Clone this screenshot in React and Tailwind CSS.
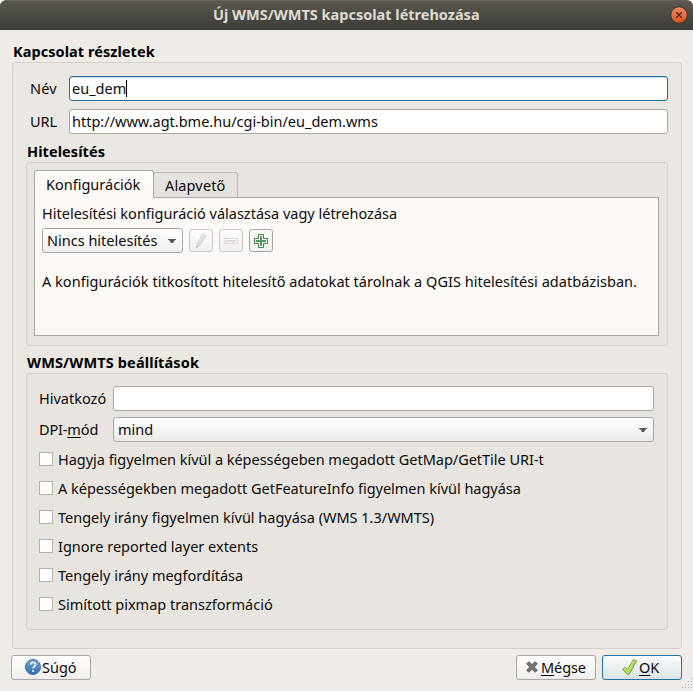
function GroupTitle({ className, children }) {
  return <h2 className={"flex items-end font-bold leading-[21px] text-black " + className}>{children}</h2>;
}

function Frame({ className, children }) {
  return <section className={"rounded-[3px] border border-[#d4d0cb] " + className}>{children}</section>;
}

function Field({ className, children }) {
  return (
    <div className={"flex h-[25px] flex-1 items-center rounded-[3px] border bg-white px-[2px] leading-[21px] " + className}>
      {children}
    </div>
  );
}

function Mnemonic({ children }) {
  return <u className="decoration-1 underline-offset-[2px]">{children}</u>;
}

function Arrow() {
  return (
    <svg width="8" height="4" viewBox="0 0 8 4" className="mt-px shrink-0">
      <path d="M0 0H8V1H7L5 4H3L1 1H0Z" fill="#5b5a57" />
    </svg>
  );
}

function ToolButton({ disabled, children }) {
  return (
    <button
      className={
        "flex h-[23px] w-6 items-center justify-center rounded-[3px] border bg-linear-to-b from-[#fcfcfb] to-[#f1f0ee] " +
        (disabled ? "border-[#c9c5c2]" : "border-[#aaa6a3]")
      }
    >
      {children}
    </button>
  );
}

function Grip() {
  const dots = [[9, 0], [6, 3], [9, 3], [3, 6], [6, 6], [9, 6], [0, 9], [3, 9], [6, 9], [9, 9]];
  return (
    <svg width="11" height="11" viewBox="0 0 11 11" className="absolute right-0 bottom-[2px]">
      {dots.map(([x, y]) => (
        <rect key={x + "-" + y} x={x} y={y} width="1" height="1" fill="#b3afab" />
      ))}
    </svg>
  );
}

const options = [
  ["Hagyja figyelmen kívül a képességeben megadott GetMap/GetTile URI-t", "tracking-[-0.03px]"],
  ["A képességekben megadott GetFeatureInfo figyelmen kívül hagyása", "tracking-[-0.02px]"],
  ["Tengely irány figyelmen kívül hagyása (WMS 1.3/WMTS)", "tracking-[-0.01px]"],
  ["Ignore reported layer extents", "tracking-normal"],
  ["Tengely irány megfordítása", "tracking-normal"],
  ["Simított pixmap transzformáció", "tracking-normal"],
];

export default function App() {
  return (
    <main className="relative flex h-[691px] w-[693px] flex-col overflow-hidden bg-white font-['Noto_Sans',sans-serif] text-[14.5px] whitespace-nowrap text-[#0b0b0b]">
      <header className="flex h-[30px] shrink-0 items-center justify-between rounded-t-[6px] border-t border-[#66635b] bg-linear-to-b from-[#5a574f] to-[#3d3c38] pr-[5px] pl-[213px]">
        <h1 className="-mt-[2px] font-bold text-[#dfdbd2]">Új WMS/WMTS kapcsolat létrehozása</h1>
        <svg width="18" height="18" viewBox="0 0 18 18" className="-mt-px">
          <defs>
            <linearGradient id="close" x1="0" y1="0" x2="0" y2="1">
              <stop offset="0" stopColor="#f68a61" />
              <stop offset="1" stopColor="#e0501d" />
            </linearGradient>
          </defs>
          <circle cx="9" cy="9" r="8.3" fill="url(#close)" stroke="#37322c" />
          <path d="M6.300 6.300l5.400 5.400M11.700 6.300l-5.400 5.400" stroke="#45291b" strokeWidth="1.3" />
        </svg>
      </header>

      <div className="flex flex-1 flex-col bg-[#efebe7] px-[11px]">
        <GroupTitle className="h-[32px] pl-[2px] tracking-[0.06px]">Kapcsolat részletek</GroupTitle>
        <Frame className="ml-px h-[587px] bg-[#ebe8e3] px-[13px] pt-[13px]">
          <div className="flex flex-col gap-2">
            <label className="flex items-center">
              <b className="w-[43px] pl-1 font-normal tracking-[0.2px]">Név</b>
              <Field className="border-[#25709c] shadow-[inset_0_1px_0_#c5dae6]">
                <span>eu_dem</span>
                <i className="h-[17px] w-px bg-black" />
              </Field>
            </label>
            <label className="flex items-center">
              <b className="w-[43px] pl-1 font-normal">URL</b>
              <Field className="border-[#aaa6a2]">http://www.agt.bme.hu/cgi-bin/eu_dem.wms</Field>
            </label>
          </div>

          <GroupTitle className="h-[28px] pl-px tracking-[0.08px]">Hitelesítés</GroupTitle>
          <Frame className="h-[184px] bg-[#e8e5e0] pt-[7px] pr-[8px] pl-[7px]">
            <nav className="flex h-[27px] items-end">
              <div className="relative -mb-px h-[28px] w-[120px] rounded-t-[3px] border border-b-0 border-[#aaa6a3] bg-linear-to-b from-white to-[#fdf9f6] to-50% pl-[11px] leading-[27px]">
                Konfigurációk
              </div>
              <div className="-ml-px h-[25px] w-[85px] rounded-t-[3px] border border-b-0 border-[#bbb7b3] bg-[#e6e3df] pl-[11px] leading-[25px] tracking-[0.15px]">
                Alapvető
              </div>
            </nav>
            <div className="h-[139px] border border-[#aaa6a3] bg-[#fdf9f6] px-[7px] pt-[5px]">
              <p className="leading-[21px]">Hitelesítési konfiguráció választása vagy létrehozása</p>
              <div className="mt-1 flex items-center gap-[6px]">
                <div className="flex h-[25px] w-[141px] items-center justify-between rounded-[3px] border border-[#aaa6a3] bg-linear-to-b from-white to-[#efeeec] pr-[6px] pl-1">
                  Nincs hitelesítés
                  <Arrow />
                </div>
                <ToolButton disabled>
                  <svg width="16" height="16" viewBox="0 0 16 16">
                    <path d="M3.500 15l.5-4.500L10 .8l3 1.700-6 10z" fill="#d9dcd4" stroke="#d3d5cf" strokeWidth=".8" />
                    <path d="M5.200 10.500L10.800 2" stroke="#eceee9" />
                    <path d="M3.300 15.200l.4-3 2 1.300z" fill="#bdbfb9" />
                  </svg>
                </ToolButton>
                <ToolButton disabled>
                  <svg width="16" height="16" viewBox="0 0 16 16">
                    <path d="M1.500 5.500h13v5h-13z" fill="#fff" stroke="#dfd3d3" />
                    <path d="M3 7h10v2H3z" fill="#e2d3d5" />
                  </svg>
                </ToolButton>
                <ToolButton>
                  <svg width="16" height="16" viewBox="0 0 16 16">
                    <path d="M5.500 1.500h5v4h4v5h-4v4h-5v-4h-4v-5h4z" fill="#fff" stroke="#3f8147" />
                    <path d="M7 3h2v4h4v2H9v4H7V9H3V7h4z" fill="#55955b" />
                  </svg>
                </ToolButton>
              </div>
              <p className="mt-[18px] leading-[21px] tracking-[0.03px]">
                A konfigurációk titkosított hitelesítő adatokat tárolnak a QGIS hitelesítési adatbázisban.
              </p>
            </div>
          </Frame>

          <GroupTitle className="h-[27px] pl-px tracking-[0.14px]">WMS/WMTS beállítások</GroupTitle>
          <Frame className="h-[257px] bg-[#e8e5e0] pt-[12px] pr-[13px] pl-[12px]">
            <div className="flex flex-col gap-[6px]">
              <label className="flex items-center">
                <b className="w-[74px] font-normal">Hivatkozó</b>
                <Field className="border-[#aaa6a2]" />
              </label>
              <div className="flex items-center">
                <b className="w-[74px] font-normal tracking-[-0.15px]">
                  DPI-<Mnemonic>m</Mnemonic>ód
                </b>
                <div className="flex h-[25px] flex-1 items-center justify-between rounded-[3px] border border-[#aaa6a3] bg-linear-to-b from-white to-[#ebeae7] pr-[6px] pl-1">
                  mind
                  <Arrow />
                </div>
              </div>
            </div>
            <ul className="mt-[3px]">
              {options.map(([text, tracking]) => (
                <li key={text} className="flex h-[29px] items-center gap-[5px]">
                  <i className="mb-px size-[14px] border border-[#b5b1ad] bg-white" />
                  <span className={tracking}>{text}</span>
                </li>
              ))}
            </ul>
          </Frame>
        </Frame>

        <footer className="flex pt-[6px]">
          <button className="flex h-[25px] w-20 items-center rounded-[3px] border border-[#aaa6a3] bg-linear-to-b from-white to-[#efeeec] pl-[13px]">
            <svg width="17" height="16" viewBox="0 0 17 16" className="-mt-px">
              <defs>
                <linearGradient id="help" x1="0" y1="0" x2="0" y2="1">
                  <stop offset="0" stopColor="#7ba5d2" />
                  <stop offset="1" stopColor="#2f6cab" />
                </linearGradient>
              </defs>
              <circle cx="8" cy="8" r="7.500" fill="url(#help)" stroke="#3d73ab" />
              <path d="M5.700 5.700c0-3 4.800-2.900 4.800-.1 0 1.800-2.400 1.900-2.400 4" fill="none" stroke="#fff" strokeWidth="1.500" />
              <circle cx="8.100" cy="11.900" r="1" fill="#fff" />
            </svg>
            Súgó
          </button>
          <button className="ml-auto flex h-[25px] w-20 items-center rounded-[3px] border border-[#aaa6a3] bg-linear-to-b from-white to-[#efeeec] pl-[7px]">
            <svg width="16" height="16" viewBox="0 0 16 16" className="-mt-px">
              <path
                d="M4.800 2.700L8 5.700 11.200 2.700 13.300 4.800 10.300 8 13.300 11.200 11.200 13.300 8 10.300 4.800 13.300 2.700 11.200 5.700 8 2.700 4.800z"
                fill="#747573"
                stroke="#555654"
                strokeWidth=".9"
                strokeLinejoin="round"
              />
            </svg>
            <span className="ml-px tracking-[-0.1px]">
              <Mnemonic>M</Mnemonic>égse
            </span>
          </button>
          <button className="ml-[6px] flex h-[25px] w-20 items-center rounded-[3px] border border-[#25709c] bg-linear-to-b from-[#fbfcfc] to-[#dbe3e8] pl-[19px]">
            <svg width="16" height="16" viewBox="0 0 16 16" className="-mt-[2px]">
              <path
                d="M.7 10.200L3.400 8.300 5.600 10.800 11.300.7 14.700 1.800 7.200 15.300H5z"
                fill="#b5d653"
                stroke="#719b2c"
                strokeWidth=".9"
                strokeLinejoin="round"
              />
              <path d="M2.200 10.200l1-.7 2.500 2.900 6-10.600" fill="none" stroke="#d3ea8b" strokeWidth=".8" />
            </svg>
            <span className="ml-px">
              <Mnemonic>O</Mnemonic>K
            </span>
          </button>
        </footer>
      </div>
      <Grip />
    </main>
  );
}
